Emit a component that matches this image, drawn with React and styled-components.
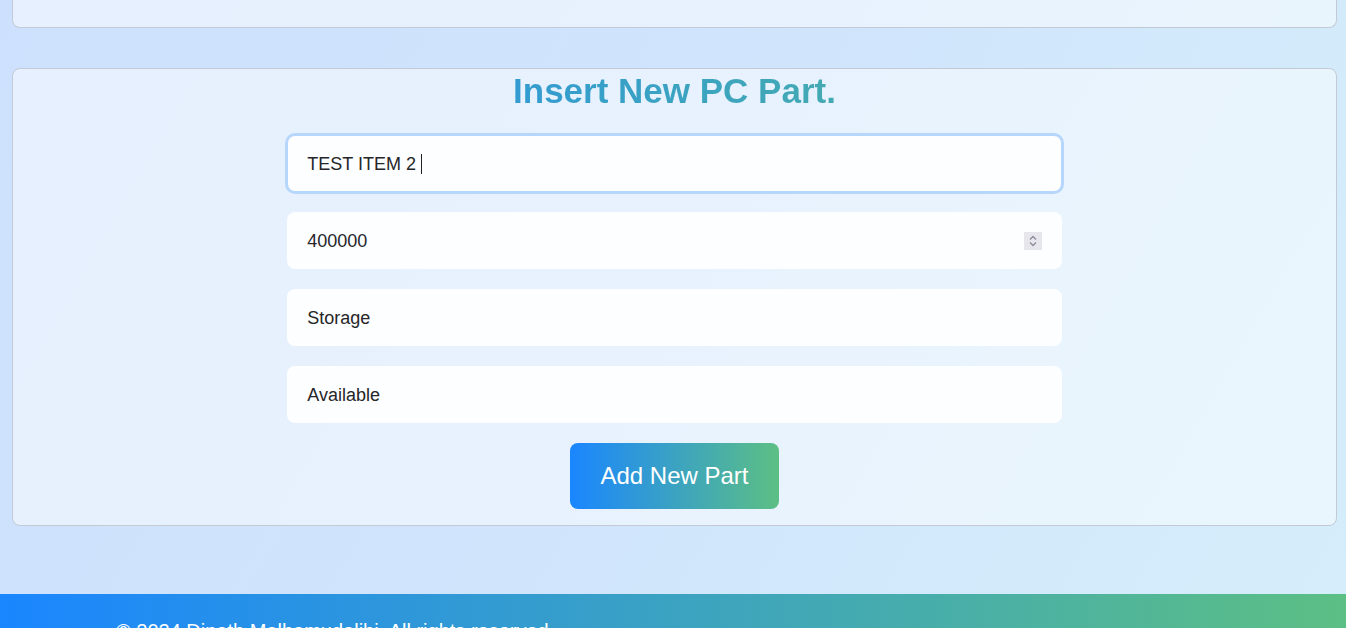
import React from "react";
import styled, { createGlobalStyle } from "styled-components";

const brand = "linear-gradient(90deg, #1a86ff, #5cbf84)";

const GlobalStyle = createGlobalStyle`
  html, body {
    margin: 0;
    padding: 0;
  }
  body {
    font-family: "Liberation Sans", Arial, sans-serif;
    background: linear-gradient(120deg, #cde0fd 0%, #d0e5fc 50%, #d5eefa 100%);
    min-height: 100vh;
    overflow: hidden;
  }
`;

const Page = styled.div`
  display: flex;
  flex-direction: column;
  min-height: 100vh;
`;

const Main = styled.main`
  display: flex;
  flex-direction: column;
  gap: 40px;
  padding: 0 9px 68px 12px;
`;

const Card = styled.section`
  box-sizing: border-box;
  background: rgba(255, 255, 255, 0.5);
  border: 1px solid #c3cad6;
  border-radius: 8px;
  ${(p) =>
    p.clipped &&
    `
    height: 28px;
    border-top: none;
    border-top-left-radius: 0;
    border-top-right-radius: 0;
  `}
`;

const Form = styled.form`
  display: flex;
  flex-direction: column;
  align-items: center;
  gap: 20px;
  padding: 2px 16px 16px;
`;

const Title = styled.h2`
  align-self: stretch;
  margin: 0 0 4px;
  font-size: 35px;
  line-height: 40px;
  font-weight: 700;
  text-align: center;
  background: ${brand};
  -webkit-background-clip: text;
  background-clip: text;
  color: transparent;
`;

const Field = styled.label`
  box-sizing: border-box;
  display: flex;
  align-items: center;
  width: 60%;
  height: 57px;
  padding: 1px 19px 0;
  background: #fdfeff;
  border: 1px solid ${(p) => (p.focused ? "#b6d6fc" : "transparent")};
  box-shadow: ${(p) => (p.focused ? "0 0 0 2px #b6d6fc" : "none")};
  border-radius: 8px;
  font-size: 18px;
  color: #262629;
  white-space: pre;
`;

const Caret = styled.span`
  width: 1px;
  height: 20px;
  background: #222;
`;

const Spinner = styled.span`
  margin-left: auto;
  width: 18px;
  height: 18px;
  background: #e6e6ec;
  display: flex;
  align-items: center;
  justify-content: center;
`;

const Button = styled.button`
  height: 66px;
  padding: 0 30px;
  border: none;
  border-radius: 8px;
  background: ${brand};
  color: #fff;
  font-family: "Liberation Sans", Arial, sans-serif;
  font-size: 24px;
  cursor: pointer;
`;

const Footer = styled.footer`
  margin-top: auto;
  background: ${brand};
  color: #fff;
  font-size: 20px;
  padding: 26px 116px;
`;

const fields = [
  { value: "TEST ITEM 2 ", focused: true },
  { value: "400000", spinner: true },
  { value: "Storage" },
  { value: "Available" },
];

export default function App() {
  return (
    <Page>
      <GlobalStyle />
      <Main>
        <Card clipped />
        <Card>
          <Form onSubmit={(e) => e.preventDefault()}>
            <Title>Insert New PC Part.</Title>
            {fields.map((f) => (
              <Field key={f.value} focused={f.focused}>
                <span>{f.value}</span>
                {f.focused && <Caret />}
                {f.spinner && (
                  <Spinner>
                    <svg width="10" height="14" viewBox="0 0 10 14" fill="none" stroke="#8b8b9a" strokeWidth="1.3">
                      <path d="M2 5.5 L5 2.5 L8 5.5" />
                      <path d="M2 8.5 L5 11.5 L8 8.5" />
                    </svg>
                  </Spinner>
                )}
              </Field>
            ))}
            <Button type="submit">Add New Part</Button>
          </Form>
        </Card>
      </Main>
      <Footer>© 2024 Dinath Malhamudalihi. All rights reserved.</Footer>
    </Page>
  );
}
